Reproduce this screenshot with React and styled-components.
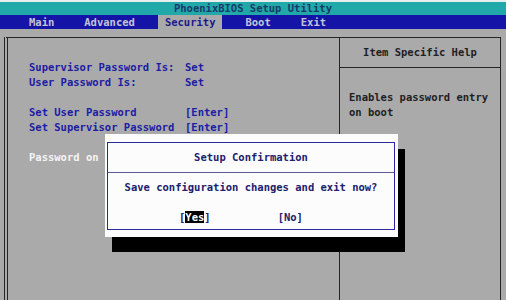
import React from 'react'
import styled, { createGlobalStyle } from 'styled-components'

const GlobalStyle = createGlobalStyle`
    html, body {
        margin: 0;
        padding: 0;
        overflow: hidden;
        background: #aaaaaa;
    }
`

const Screen = styled.div`
    position: relative;
    width: 506px;
    height: 300px;
    overflow: hidden;
    background: #aaaaaa;
    font-family: "DejaVu Sans Mono", "Liberation Mono", monospace;
    font-size: 10.5px;
    font-weight: bold;
`

const TitleBar = styled.div`
    height: 13px;
    border-top: 2px solid #e6eeee;
    background: #21a8a8;
    color: #173a6a;
    text-align: center;
    line-height: 13px;
`

const MenuBar = styled.div`
    display: flex;
    gap: 16px;
    height: 14px;
    padding-left: 22px;
    background: #1414a6;
    line-height: 14px;
`

const MenuItem = styled.div`
    padding: 0 7px;
    color: ${p => (p.$active ? '#1a1a8c' : '#c4c4d8')};
    background: ${p => (p.$active ? '#aaaaaa' : 'transparent')};
`

const Frame = styled.div`
    display: grid;
    grid-template-columns: 331px 1fr;
    height: 300px;
    margin: 8px 5px 0 4px;
    border-top: 1px solid #262626;
    border-left: 4px double #262626;
    border-right: 1px solid #262626;
`

const LeftPanel = styled.div`
    padding: 22px 0 0 21px;
`

const Row = styled.div`
    display: grid;
    grid-template-columns: 156px auto;
    height: 15px;
    line-height: 15px;
    color: ${p => (p.$selected ? '#f4f4f4' : '#1c1ca4')};
    white-space: nowrap;
`

const Spacer = styled.div`
    height: 15px;
`

const RightPanel = styled.div`
    border-left: 1px solid #262626;
    color: #1e1e24;
`

const HelpHeader = styled.div`
    height: 29px;
    line-height: 29px;
    text-align: center;
    border-bottom: 1px solid #262626;
`

const HelpText = styled.div`
    padding: 22px 9px 0;
    line-height: 15px;
`

const Dialog = styled.div`
    position: absolute;
    left: 105px;
    top: 134px;
    width: 293px;
    height: 103px;
    box-sizing: border-box;
    padding: 8px 3px 7px 2px;
    background: #fcfcfc;
    box-shadow: 7px 15px 0 #000;
`

const DialogInner = styled.div`
    height: 100%;
    box-sizing: border-box;
    border: 1px solid #2a2a9e;
    color: #20206e;
`

const DialogTitle = styled.div`
    height: 29px;
    line-height: 29px;
    text-align: center;
    border-bottom: 1px solid #5a5a9a;
`

const Message = styled.div`
    margin-top: 7px;
    line-height: 15px;
    text-align: center;
    white-space: nowrap;
`

const Choices = styled.div`
    display: flex;
    gap: 67px;
    margin-top: 15px;
    padding-left: 71px;
    line-height: 15px;
`

const Highlight = styled.span`
    background: #000;
    color: #fff;
`

const menu = ['Main', 'Advanced', 'Security', 'Boot', 'Exit']

export default function App() {
    return (
        <Screen>
            <GlobalStyle />
            <TitleBar>PhoenixBIOS Setup Utility</TitleBar>
            <MenuBar>
                {menu.map(m => (
                    <MenuItem key={m} $active={m === 'Security'}>{m}</MenuItem>
                ))}
            </MenuBar>
            <Frame>
                <LeftPanel>
                    <Row><span>Supervisor Password Is:</span><span>Set</span></Row>
                    <Row><span>User Password Is:</span><span>Set</span></Row>
                    <Spacer />
                    <Row><span>Set User Password</span><span>[Enter]</span></Row>
                    <Row><span>Set Supervisor Password</span><span>[Enter]</span></Row>
                    <Spacer />
                    <Row $selected><span>Password on</span></Row>
                </LeftPanel>
                <RightPanel>
                    <HelpHeader>Item Specific Help</HelpHeader>
                    <HelpText>
                        Enables password entry<br />
                        on boot
                    </HelpText>
                </RightPanel>
            </Frame>
            <Dialog>
                <DialogInner>
                    <DialogTitle>Setup Confirmation</DialogTitle>
                    <Message>Save configuration changes and exit now?</Message>
                    <Choices>
                        <span>[<Highlight>Yes</Highlight>]</span>
                        <span>[No]</span>
                    </Choices>
                </DialogInner>
            </Dialog>
        </Screen>
    )
}
